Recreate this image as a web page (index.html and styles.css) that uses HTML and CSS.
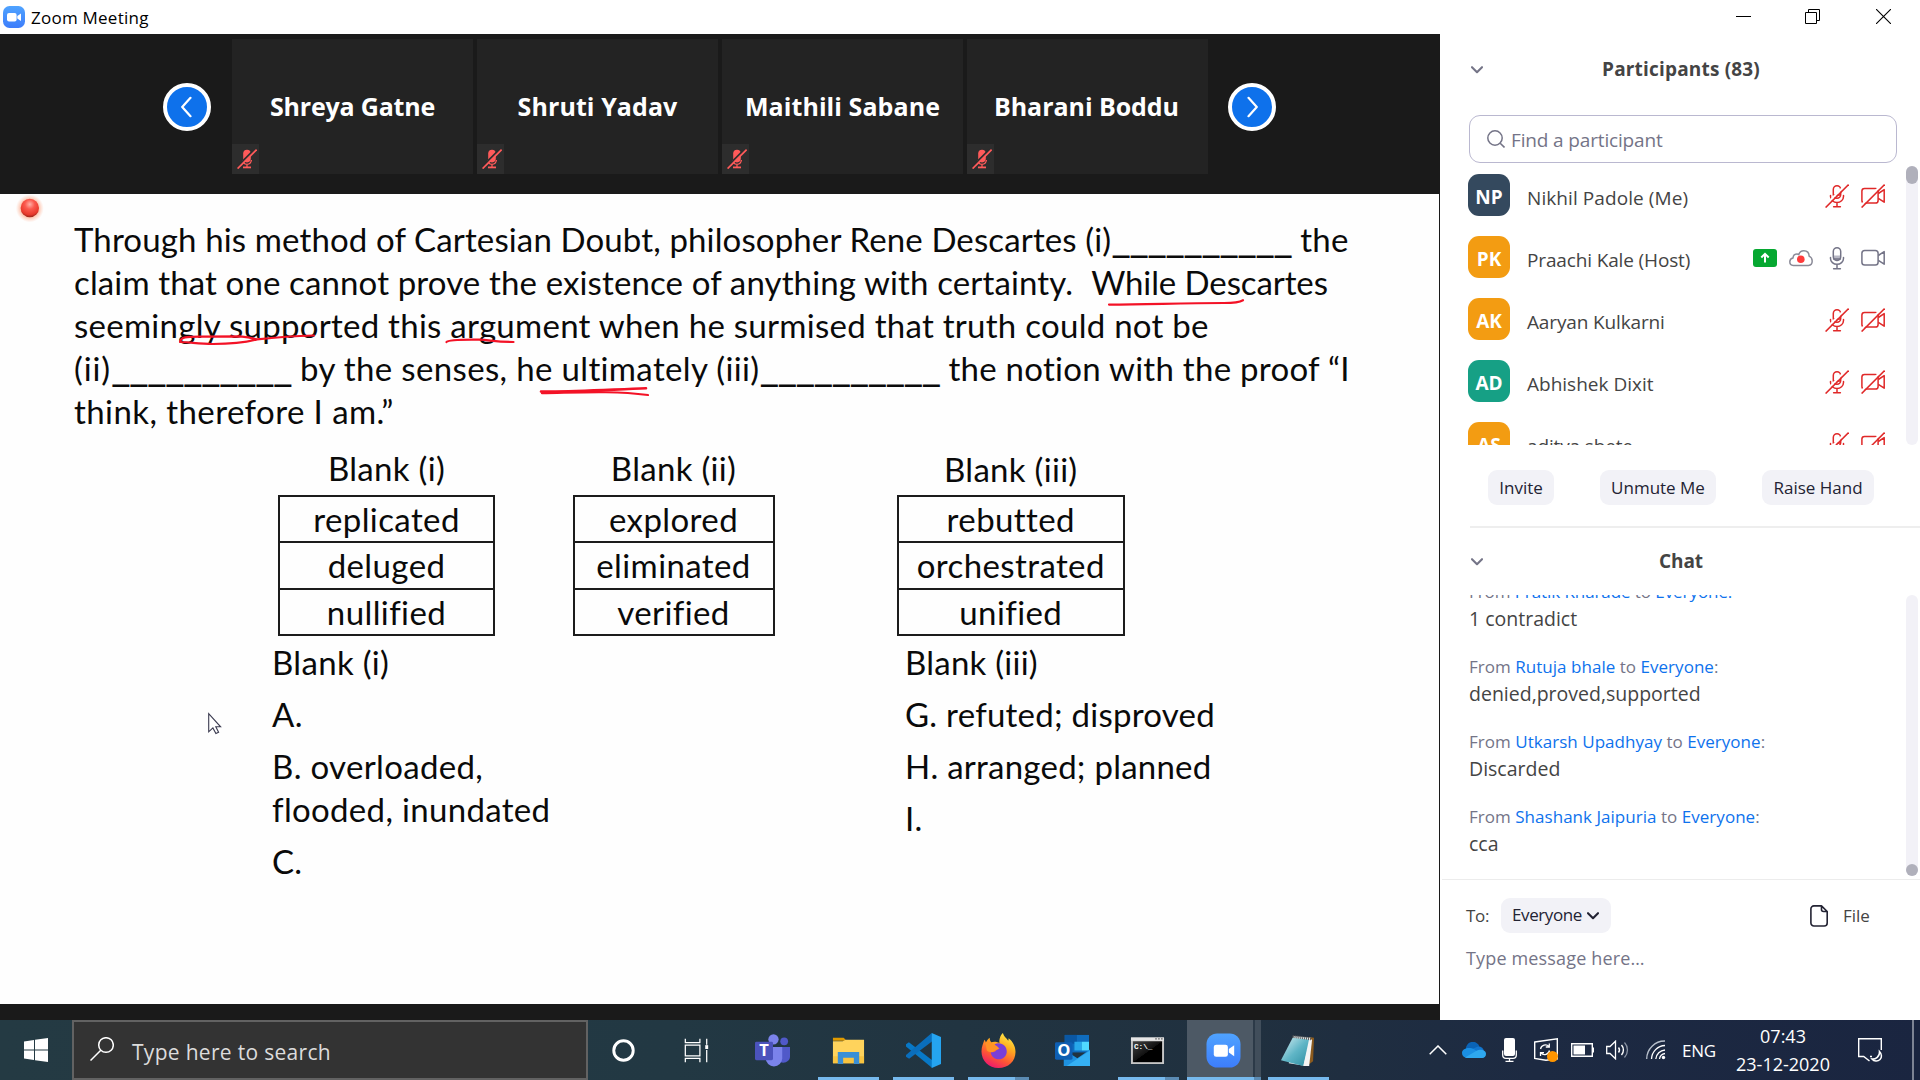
FILE: index.html
```html
<!DOCTYPE html>
<html lang="en">
<head>
<meta charset="utf-8">
<title>Zoom Meeting</title>
<link rel="stylesheet" href="styles.css">
</head>
<body>
<svg class="defs" aria-hidden="true">
  <defs>
    <linearGradient id="zoomBlue" x1="0" y1="0" x2="0" y2="1"><stop offset="0" stop-color="#4fa3ff"/><stop offset="1" stop-color="#3d7dfb"/></linearGradient>
    <linearGradient id="ffBody" x1=".8" y1="0" x2=".3" y2="1"><stop offset="0" stop-color="#fff14f"/><stop offset=".35" stop-color="#ffae1f"/><stop offset=".7" stop-color="#ff5634"/><stop offset="1" stop-color="#ee1670"/></linearGradient>
    <linearGradient id="noteGlass" x1="0" y1="0" x2="1" y2="1"><stop offset="0" stop-color="#d5eef2"/><stop offset=".5" stop-color="#5fb5c6"/><stop offset="1" stop-color="#2b8ba0"/></linearGradient>
    <linearGradient id="cmdGlass" x1="0" y1="0" x2="1" y2="1"><stop offset="0" stop-color="#444"/><stop offset=".5" stop-color="#111"/><stop offset=".51" stop-color="#000"/></linearGradient>
    <radialGradient id="recDot" cx=".5" cy=".3" r=".75"><stop offset="0" stop-color="#ffb0a6"/><stop offset=".35" stop-color="#fb5a4e"/><stop offset=".75" stop-color="#e8392c"/><stop offset="1" stop-color="#7d1d14"/></radialGradient>
    <radialGradient id="recGlow"><stop offset=".55" stop-color="#ff8a60" stop-opacity=".7"/><stop offset="1" stop-color="#ffb090" stop-opacity="0"/></radialGradient>
    <symbol id="mic-off" viewBox="0 0 24 24">
      <g fill="none" stroke="#e02828" stroke-width="1.5" stroke-linecap="round">
        <rect x="8.3" y="1.8" width="7.4" height="12.4" rx="3.7"/>
        <path d="M5.5 11.5v1a6.5 6 0 0 0 13 0v-1M12 18.5v4M8.6 22.8h6.8M9 11h6"/>
      </g>
      <path d="M-1 22.5 22.5-1" stroke="#fff" stroke-width="2.2"/>
      <path d="M.6 23.6 23.6.6" stroke="#e02828" stroke-width="1.5"/>
    </symbol>
    <symbol id="cam-off" viewBox="0 0 24 24">
      <g fill="none" stroke="#e02828" stroke-width="1.5" stroke-linejoin="round">
        <rect x=".9" y="4.4" width="16.2" height="14.6" rx="2.6"/>
        <path d="M17.3 9.5 23.2 5.6v12.6l-5.9-3.8"/>
      </g>
      <path d="M-1 22.5 22.5-1" stroke="#fff" stroke-width="2.2"/>
      <path d="M.6 23.6 23.6.6" stroke="#e02828" stroke-width="1.5"/>
    </symbol>
    <symbol id="mic-on" viewBox="0 0 24 24">
      <path d="M8.5 9.5h7v2.2a3.5 3.5 0 0 1-7 0z" fill="#b9b9c6"/>
      <g fill="none" stroke="#747487" stroke-width="1.5" stroke-linecap="round">
        <rect x="8.3" y="1.8" width="7.4" height="12.6" rx="3.7"/>
        <path d="M5.5 11.5v1a6.5 5.8 0 0 0 13 0v-1M12 18.5v4M8.6 22.8h6.8M8.6 13h6.8"/>
      </g>
    </symbol>
    <symbol id="cam-on" viewBox="0 0 24 24">
      <g fill="none" stroke="#747487" stroke-width="1.5" stroke-linejoin="round">
        <rect x=".9" y="4.4" width="16.2" height="14.6" rx="2.8"/>
        <path d="M17.3 9.5 23.2 5.6v12.6l-5.9-3.8"/>
      </g>
    </symbol>
    <symbol id="tile-mic" viewBox="0 0 20 20">
      <rect x="6.2" y=".8" width="7.6" height="12.6" rx="3.8" fill="#ff5a5a"/>
      <path d="M5.6 11c.3 2.500 2 4.300 4.400 4.300s4.100-1.800 4.400-4.300M10 15v3" fill="none" stroke="#ff5a5a" stroke-width="1.300"/>
      <path d="M6 18.4h8" stroke="#ff5a5a" stroke-width="1.8"/>
      <path d="M-.6 18.6 18.6-.6" stroke="#2c2c2c" stroke-width="2"/>
      <path d="M.6 19.6 19.6.6" stroke="#ff5a5a" stroke-width="1.7"/>
    </symbol>
    <symbol id="chevron" viewBox="0 0 12 8"><path d="M1 1.2 6 6.2l5-5" fill="none" stroke="currentColor" stroke-width="2.1" stroke-linecap="round" stroke-linejoin="round"/></symbol>
  </defs>
</svg>

<header class="titlebar">
  <svg class="app-icon" viewBox="0 0 22 22"><rect width="22" height="22" rx="6.5" fill="url(#zoomBlue)"/><rect x="4" y="7" width="9.6" height="8.4" rx="2" fill="#fff"/><path d="M14.3 10 18 7.4v7.6l-3.7-2.6z" fill="#fff"/></svg>
  <span class="app-title">Zoom Meeting</span>
  <div class="window-buttons">
    <svg viewBox="0 0 15 15"><path d="M0 7.5h15" stroke="#000"/></svg>
    <svg viewBox="0 0 15 15"><path d="M.5 3.5h11v11H.5zM3.5 3.5v-3h11v11h-3" fill="none" stroke="#000"/></svg>
    <svg viewBox="0 0 15 15"><path d="m0 0 15 15M15 0 0 15" stroke="#000" stroke-width="1.1"/></svg>
  </div>
</header>

<div class="workspace">
  <main class="stage">
    <section class="gallery">
      <button class="pager"><svg viewBox="0 0 12 22"><path d="M9.5 1.8 1.2 11l8.3 9.2" fill="none" stroke="#fff" stroke-width="2.2" stroke-linecap="round" stroke-linejoin="round"/></svg></button>
      <div class="tiles">
        <div class="tile"><span class="t1">Shreya Gatne</span><i class="badge"><svg><use href="#tile-mic"/></svg></i></div>
        <div class="tile"><span>Shruti Yadav</span><i class="badge"><svg><use href="#tile-mic"/></svg></i></div>
        <div class="tile"><span>Maithili Sabane</span><i class="badge"><svg><use href="#tile-mic"/></svg></i></div>
        <div class="tile"><span class="t4">Bharani Boddu</span><i class="badge"><svg><use href="#tile-mic"/></svg></i></div>
      </div>
      <button class="pager"><svg viewBox="0 0 12 22"><path d="M2.5 1.8 10.8 11l-8.3 9.2" fill="none" stroke="#fff" stroke-width="2.2" stroke-linecap="round" stroke-linejoin="round"/></svg></button>
    </section>

    <section class="slide">
      <div class="passage">
        <div class="line"><span class="s13">Through his method of Cartesian Doubt, philosopher Rene Descartes (i)</span><span class="blank">__________</span><span class="after s27">the</span></div>
        <div class="line"><span class="s13">claim that one cannot prove the existence of anything with certainty.</span><span class="sentence">While Descartes</span></div>
        <div class="line"><span class="s27">seemingly supported this argument when he surmised that truth could not be</span></div>
        <div class="line"><span class="s90">(ii)</span><span class="blank">__________</span><span class="after s36">by the senses, he ultimately (iii)</span><span class="blank">__________</span><span class="after s27">the notion with the proof “I</span></div>
        <div class="line"><span class="s40">think, therefore I am.”</span></div>
      </div>
      <div class="choices">
        <div class="choice c1"><h3>Blank (i)</h3><ul><li>replicated</li><li>deluged</li><li>nullified</li></ul></div>
        <div class="choice c2"><h3>Blank (ii)</h3><ul><li>explored</li><li>eliminated</li><li>verified</li></ul></div>
        <div class="choice c3"><h3>Blank (iii)</h3><ul><li>rebutted</li><li>orchestrated</li><li>unified</li></ul></div>
      </div>
      <div class="answers">
        <div class="answer"><p>Blank (i)</p><p>A.</p><p>B. overloaded,<br>flooded, inundated</p><p>C.</p></div>
        <div class="answer"><p>Blank (iii)</p><p>G. refuted; disproved</p><p>H. arranged; planned</p><p>I.</p></div>
      </div>
      <svg class="ink" viewBox="0 194 1439 810">
        <g fill="none" stroke="#f31226" stroke-width="2.2" stroke-linecap="round" stroke-linejoin="round">
          <path d="M180 342C181 337 186 336.6 200 336.6L240 336.4C248 337 252 338 257 339.4C247 342 228 344 213 344C198 344 190 342 180 342M257 339.4C275 337.5 296 336 314 335.5"/>
          <path d="M446.5 342C448 339.8 462 339.4 479 339.6C490 340 496 342 513.5 342"/>
          <path d="M541 391.5C565 392.5 612 389.5 646 388.3" stroke-width="2.6"/>
          <path d="M542 393.2C580 392.6 612 390.5 648 395"/>
          <path d="M1109 304.6C1150 304.5 1180 303 1224 303C1232 303 1240 302 1243 300.2"/>
        </g>
        <circle cx="29.8" cy="208.4" r="14" fill="url(#recGlow)"/>
        <circle cx="29.8" cy="208" r="9.2" fill="url(#recDot)"/>
        <path d="M208.7 713.6v18.2l4.2-3.900 3 5.600 2.700-1.300-2.800-5.400h4.800z" fill="#fff" stroke="#3b3b50" stroke-width="1.1"/>
      </svg>
    </section>
  </main>

  <aside class="sidebar">
    <section class="participants">
      <header class="panel-head"><svg class="chev"><use href="#chevron"/></svg><h2>Participants (83)</h2></header>
      <div class="search"><svg viewBox="0 0 18 18"><circle cx="8" cy="8" r="7.2" fill="none" stroke="#747487" stroke-width="1.5"/><path d="m13.2 13.2 4.3 4.3" stroke="#747487" stroke-width="1.6"/></svg><span>Find a participant</span></div>
      <div class="people">
        <div class="person"><b class="navy">NP</b><span class="wide">Nikhil Padole (Me)</span><div class="icons"><svg><use href="#mic-off"/></svg><svg><use href="#cam-off"/></svg></div></div>
        <div class="person"><b>PK</b><span class="tight">Praachi Kale (Host)</span><div class="icons">
          <svg viewBox="0 0 24 24"><rect y="3" width="24" height="18" rx="3" fill="#06a831"/><path d="M12 16.5V9M8.3 11.5 12 7.8l3.700 3.700" fill="none" stroke="#fff" stroke-width="2"/></svg>
          <svg viewBox="0 0 24 24"><path d="M4.300 19.400C2 19.400.8 17.700.8 15.800c0-2 1.200-3.500 3.200-3.900.2-2.300 1.800-3.800 4-3.800.7 0 1.300.1 1.800.4C10.600 6 12.400 4.700 14.800 4.700c3.300 0 5.300 2.300 5.300 5.400 2 .8 3.100 2.700 3.100 5 0 2.400-1.400 4.300-3.700 4.300z" fill="none" stroke="#8b8b98" stroke-width="1.5"/><circle cx="11.800" cy="13.200" r="3.800" fill="#ff3b3b"/></svg>
          <svg><use href="#mic-on"/></svg><svg><use href="#cam-on"/></svg></div></div>
        <div class="person"><b>AK</b><span class="tight">Aaryan Kulkarni</span><div class="icons"><svg><use href="#mic-off"/></svg><svg><use href="#cam-off"/></svg></div></div>
        <div class="person"><b class="teal">AD</b><span>Abhishek Dixit</span><div class="icons"><svg><use href="#mic-off"/></svg><svg><use href="#cam-off"/></svg></div></div>
        <div class="person"><b>AS</b><span class="tight">aditya shete</span><div class="icons"><svg><use href="#mic-off"/></svg><svg><use href="#cam-off"/></svg></div></div>
        <i class="track"><i class="thumb"></i></i>
      </div>
      <div class="actions"><button class="pill invite">Invite</button><button class="pill unmute">Unmute Me</button><button class="pill raise">Raise Hand</button></div>
    </section>
    <section class="chat">
      <header class="panel-head"><svg class="chev"><use href="#chevron"/></svg><h2>Chat</h2></header>
      <div class="messages">
        <article><p class="from pk">From <a>Pratik Kharade</a> to <a>Everyone:</a></p><p>1 contradict</p></article>
        <article><p class="from">From <a>Rutuja bhale</a> to <a>Everyone</a>:</p><p>denied,proved,supported</p></article>
        <article><p class="from">From <a>Utkarsh Upadhyay</a> to <a>Everyone</a>:</p><p>Discarded</p></article>
        <article><p class="from">From <a>Shashank Jaipuria</a> to <a>Everyone</a>:</p><p>cca</p></article>
        <i class="track bottom"><i class="thumb"></i></i>
      </div>
      <div class="composer">
        <div class="to-row"><span class="to">To:</span><button class="pill everyone">Everyone<svg><use href="#chevron"/></svg></button>
          <svg class="file-icon" viewBox="0 0 18 22"><path d="M4 .9h7.500L17.200 6.500V18a3 3 0 0 1-3 3H4a3 3 0 0 1-3.100-3V4A3 3 0 0 1 4 .9zM11.500 1v3.500a2 2 0 0 0 2 2h3.700" fill="none" stroke="#232333" stroke-width="1.600" stroke-linejoin="round"/></svg><span class="file">File</span></div>
        <p class="placeholder">Type message here…</p>
      </div>
    </section>
  </aside>
</div>

<footer class="taskbar">
  <div class="start"><svg viewBox="0 0 24 24"><path d="M0 3.400 10 2v9.500H0zM11 1.800 24 0v11.500H11zM0 12.500h10V22L0 20.600zM11 12.500h13V24l-13-1.800z" fill="#fff"/></svg></div>
  <div class="find"><svg viewBox="0 0 24 24"><circle cx="16" cy="8" r="7.300" fill="none" stroke="#fff" stroke-width="1.500"/><path d="M10.800 13.200.5 23.500" stroke="#fff" stroke-width="1.500"/></svg><span>Type here to search</span></div>
  <nav class="apps">
    <div class="app w-cortana"><svg viewBox="0 0 36 36"><circle cx="18" cy="18" r="10" fill="none" stroke="#fff" stroke-width="3"/></svg></div>
    <div class="app w-view"><svg viewBox="0 0 36 36"><path d="M6.500 6v4h15V6M6.500 30v-4h15v4M6.500 12.500h15v11h-15zM28.500 6v6M28.500 17.500V30" fill="none" stroke="#fff" stroke-width="1.300"/><path d="M27 12.500h3v4h-3z" fill="#fff"/></svg></div>
    <div class="app w-teams"><svg viewBox="0 0 36 36"><circle cx="30" cy="8.500" r="4" fill="#5059c9"/><path d="M22 14.500h14v9.500c0 4-3 6.500-7 6.500S22 28 22 24z" fill="#5059c9"/><circle cx="19" cy="6.500" r="5.300" fill="#7b83eb"/><path d="M11 14.500h17v11.500A8.500 8.500 0 0 1 11 26z" fill="#7b83eb"/><rect x="0" y="9" width="18.500" height="19" rx="1.500" fill="#4b53bc"/><text x="9.200" y="24" class="glyph">T</text></svg></div>
    <div class="app w-files open"><svg viewBox="0 0 36 36"><path d="M2 5h11l3 3H2z" fill="#e09a00"/><path d="M2 8.500h10L15 7h19v24H2z" fill="#ffd35c"/><path d="M2 24h32v7H2z" fill="#f9c440"/><path d="M7 19.500h22V32h-5.500v-6.500h-11V32H7z" fill="#3a8fd6"/></svg></div>
    <div class="app w-code open"><svg viewBox="0 0 36 36"><path d="M0 11.500 3 9.500 27 28v8L0 13.800z" fill="#0878c6"/><path d="M0 22.500 26.500 0 27 8.500 3.200 26.500 0 24.500z" fill="#0a6ebc"/><path d="M26.500 0 36 4v28l-9.500 4z" fill="#25a4f0"/></svg></div>
    <div class="app w-fox open"><svg viewBox="0 0 36 36"><path d="M22.500 0c1 3.500 3 4.500 5.500 8 .5-1 .3-2 .3-2.600C33 9 35.500 14 35.500 19.500 35.500 29 28 36 18 36S.500 28.500.500 19c0-5 2-8.500 3-12 1 1 1.300 2 1.500 3 1-2 2-3.500 4-5-.2 2 .5 3.500 1.500 4.500 3-1 6.500-.5 8.500 1-.5-3 .5-8 3.500-10.500z" fill="url(#ffBody)"/><path d="M14 11.500c6-3 13 1 12.500 8-.3 4.500-4 7.500-8 7.500-5 0-8.500-3.500-8.500-8 2 1.500 4 .5 5.500-1 1-1 3-1 3.500-2.500-2-.5-3.500-1-5-4z" fill="#7a3fd8"/><path d="M4.500 9.500c3-.5 5 .5 7 2.500 3 0 6 1.500 6.500 3.500-1 2-3 1.500-4.500 3-1.500 1.500-5 2-7.500-.5z" fill="#ff9326"/></svg><i class="stack"></i></div>
    <div class="app w-mail"><svg viewBox="0 0 36 36"><path d="M10 2h25v18H10z" fill="#0f6cbd"/><path d="M10 2h12.500v9H10z" fill="#0a57a3"/><path d="M20 9h7.500v9H20z" fill="#28a8ea"/><path d="M27.500 9H35v9h-7.500z" fill="#50d9ff"/><path d="M9 17l14 9 13-9v17H9z" fill="#1e91df"/><path d="M36 18v16H12z" fill="#35b0f3"/><rect x="0" y="9.500" width="18" height="18" rx="1.500" fill="#0f5fb3"/><text x="9" y="24" class="glyph">O</text></svg></div>
    <div class="app w-cmd open"><svg viewBox="0 0 36 36"><path d="M1 4.500h34v27.500H1z" fill="#c6c6c6"/><path d="M1 4.500h34V8H1z" fill="#e6e6e6"/><path d="M3 8.500h30V30H3z" fill="url(#cmdGlass)"/><path d="M26 6h1.500M29 6h1.500M32 6h1.500" stroke="#555" stroke-width="1.200"/><text x="4" y="16" class="prompt">C:\_</text></svg><i class="stack"></i></div>
    <div class="app w-zoom open active"><svg viewBox="0 0 36 36"><rect x=".5" y=".5" width="35" height="35" rx="11" fill="url(#zoomBlue)"/><rect x="8" y="12" width="14.500" height="12.500" rx="2.500" fill="#fff"/><path d="M23.500 16.500 29 12.500v11.500l-5.500-4z" fill="#fff"/></svg><i class="stack"></i></div>
    <div class="app w-note open"><svg viewBox="0 0 36 36"><path d="M30 4l5 1-1 24-5 4z" fill="#8a5a1e"/><path d="M14 3 32 5 27 34 9 31z" fill="#e8eef0"/><path d="M13 5 31 7 24 34 1 28z" fill="url(#noteGlass)"/><path d="M30 6l3 1-3 27-6 0z" fill="#f4f4f4"/><path d="M13 3.500 32 6" stroke="#555" stroke-width="3" stroke-dasharray="1 1"/></svg></div>
  </nav>
  <div class="tray">
    <svg class="i-up" viewBox="0 0 18 10"><path d="M.700 9.300 9 1l8.300 8.300" fill="none" stroke="#fff" stroke-width="1.500"/></svg>
    <svg class="i-cloud" viewBox="0 0 24 16"><path d="M4 8A7 7 0 0 1 17.500 4.500L12 11z" fill="#0a63b6"/><path d="M16 4.500a6 6 0 0 1 6 5L14 13 9 7.500z" fill="#1276cf"/><path d="M8 6c2.500 0 3.500 1 6 2.500l9 5.500c-1 1.500-2 2-4 2H5A5 5 0 0 1 0 11C0 8 3 5.500 8 6z" fill="#1a8fe3"/><path d="M3 15.500 15 8.500c3-1.500 9-.5 9 3.500 0 2.500-2 4-4 4H5z" fill="#2ea8ef"/></svg>
    <svg class="i-mic" viewBox="0 0 15 24"><rect x="2" y="0" width="11" height="18" rx="2" fill="#fff"/><path d="M.700 12.500V17c0 2 1.300 3.300 3.300 3.300h7c2 0 3.300-1.300 3.300-3.300v-4.500M7.500 20.500v3M3.500 23.300h8" fill="none" stroke="#fff" stroke-width="1.300"/></svg>
    <svg class="i-upd" viewBox="0 0 24 24"><path d="M.700 4 23.300.8v20L12 22.200.700 20.500z" fill="none" stroke="#fff" stroke-width="1.400"/><path d="M6.500 11a5 5 0 0 1 8.500-2.500M15.300 5.500v3.500h-3.500M15.500 12.500A5 5 0 0 1 7 15M6.500 18v-3.300H10" fill="none" stroke="#fff" stroke-width="1.300"/><circle cx="18.500" cy="18.500" r="5.500" fill="#ff9500"/></svg>
    <svg class="i-bat" viewBox="0 0 23 14"><path d="M.700.700h20.600v12.600H.700z" fill="none" stroke="#fff" stroke-width="1.400"/><path d="M2.500 2.500H14v9H2.500zM21.500 4.500H23v5h-1.500z" fill="#fff"/></svg>
    <svg class="i-vol" viewBox="0 0 24 20"><path d="M.700 6.500H4L9.500 1.200v17.600L4 13.500H.700z" fill="none" stroke="#fff" stroke-width="1.300"/><path d="M12.500 7.500a4 4 0 0 1 0 5M15.500 5a7.500 7.500 0 0 1 0 10" fill="none" stroke="#fff" stroke-width="1.400"/><path d="M18.500 2.500a11 11 0 0 1 0 15" fill="none" stroke="#8a93a3" stroke-width="1.300"/></svg>
    <svg class="i-net" viewBox="0 0 20 20"><g fill="none" stroke="#fff" stroke-width="1.300"><path d="M.700 19A18 18 0 0 1 19 1" stroke="#b8c0cc"/><path d="M5.500 19A14 14 0 0 1 19 5.500M9.800 19A10 10 0 0 1 19 10M13.500 19a6.500 6.500 0 0 1 5.500-5.500"/></g><circle cx="17.500" cy="17.500" r="1.700" fill="#fff"/></svg>
    <span class="lang">ENG</span>
    <div class="clock"><span>07:43</span><span>23-12-2020</span></div>
    <svg class="i-note" viewBox="0 0 24 24"><path d="M14 18.500H12M23.300 12V.7H.7v17.800h5L11.500 23" fill="none" stroke="#fff" stroke-width="1.400"/><path d="M21.500 13.500c2.500 2.500 2.500 6 .5 8-2.300 2.300-6 2-8-.5 3.500.5 8-2.500 7.500-7.500z" fill="none" stroke="#fff" stroke-width="1.500"/></svg>
    <i class="desktop-edge"></i>
  </div>
</footer>
</body>
</html>
```
FILE: styles.css
```css
* { box-sizing: border-box; }
body {
  margin: 0;
  width: 1920px;
  height: 1080px;
  overflow: hidden;
  display: flex;
  flex-direction: column;
  background: #fff;
  font-family: "Open Sans", "Noto Sans", sans-serif;
  color: #444;
}
p, h2, h3, ul { margin: 0; padding: 0; }
button { font: inherit; border: 0; padding: 0; }
svg { display: block; flex: none; }
i { font-style: normal; }
.defs { position: absolute; width: 0; height: 0; }

/* title bar */
.titlebar { height: 34px; flex: none; display: flex; align-items: center; padding-left: 3px; color: #000; }
.app-icon { width: 22px; height: 22px; }
.app-title { margin-left: 6px; font-size: 17px; letter-spacing: .24px; }
.window-buttons { margin-left: auto; display: flex; gap: 54px; padding: 0 29px 1px 0; }
.window-buttons svg { width: 15px; height: 15px; }
.window-buttons svg:last-child { margin-left: 2px; }

.workspace { display: flex; height: 986px; flex: none; }

/* gallery strip */
.stage { width: 1440px; background: #1a1a1a; border-right: 1px solid #1a1a1a; }
.gallery { height: 160px; display: flex; align-items: flex-start; padding-left: 163px; }
.pager {
  width: 48px; height: 48px; margin-top: 49px;
  border: 4px solid #fff; border-radius: 50%;
  background: #0e71eb;
  display: flex; align-items: center; justify-content: center;
}
.pager svg { width: 12px; height: 22px; }
.tiles { display: flex; gap: 4px; padding: 5px 0 20px; margin: 0 20px 0 21px; }
.tile {
  position: relative;
  width: 241px; height: 135px;
  padding-bottom: 2px;
  background: #232323;
  display: flex; align-items: center; justify-content: center;
  color: #fff; font-size: 25px; font-weight: 700; letter-spacing: .08px;
}
.tile .t1 { letter-spacing: -.2px; }
.tile .t4 { letter-spacing: -.05px; margin-right: 2px; }
.badge {
  position: absolute; left: 0; bottom: 0;
  width: 27px; height: 30px; padding-left: 2px; background: #2d2d2d;
  display: flex; align-items: center; justify-content: center;
}
.badge svg { width: 20px; height: 20px; }

/* shared slide */
.slide {
  position: relative;
  width: 1439px; height: 810px;
  padding-top: 24px;
  background: #fefefe;
  color: #0a0a0a;
  font-family: Lato, "Open Sans", sans-serif;
  font-size: 33px;
  line-height: 43px;
}
.passage { padding-left: 74px; }
.line { display: flex; align-items: baseline; height: 43px; white-space: pre; }
.s13 { letter-spacing: .13px; }
.s27 { letter-spacing: .27px; }
.s36 { letter-spacing: .35px; }
.s40 { letter-spacing: .42px; }
.s90 { letter-spacing: .9px; }
.blank { width: 180px; font-size: 43px; letter-spacing: -1.740px; line-height: 1px; }
.after { margin-left: 9px; }
.sentence { margin-left: 18px; letter-spacing: -.1px; }
.choices { display: flex; margin-top: 14px; padding-left: 278px; height: 188px; }
.choice h3 { font-size: 33px; font-weight: 400; text-align: center; letter-spacing: .3px; height: 48px; }
.choice ul { list-style: none; border: 2px solid #1c1c1c; }
.choice li { height: 46.500px; line-height: 45px; text-align: center; letter-spacing: .4px; border-top: 2px solid #1c1c1c; }
.choice li:first-child { border-top: 0; height: 44px; line-height: 44px; }
.c1 { width: 217px; }
.c2 { width: 202px; margin-left: 77.500px; }
.c3 { width: 228.500px; margin-left: 122px; }
.c3 h3 { padding-top: 1px; }
.answers { display: flex; padding-left: 272px; margin-top: 6px; letter-spacing: .32px; }
.answer { width: 633px; flex: none; display: flex; flex-direction: column; gap: 9px; }
.answer:last-child { width: 400px; letter-spacing: .24px; }
.ink { position: absolute; left: 0; top: 0; width: 1439px; height: 810px; }

/* sidebar */
.sidebar { width: 480px; background: #fff; }
.participants { height: 494px; border-bottom: 2px solid transparent; border-image: linear-gradient(90deg, #fff 32px, #eee 32px) 2; }
.panel-head { position: relative; display: flex; align-items: center; justify-content: center; height: 81px; padding: 0 0 12px 2px; }
.panel-head h2 { font-size: 19px; font-weight: 700; line-height: 26px; letter-spacing: .18px; color: #444; }
.chev { position: absolute; left: 31px; top: 32px; width: 12px; height: 8px; color: #747487; }
.search {
  width: 428px; height: 48px; margin-left: 29px; padding-left: 17px;
  border: 1.500px solid #bab8d0; border-radius: 11px;
  display: flex; align-items: center;
  color: #747487; font-size: 19px;
}
.search svg { width: 18px; height: 18px; margin-right: 6px; }
.search span { line-height: 26px; letter-spacing: -.15px; margin-top: 1px; }
.people { position: relative; height: 282px; padding-top: 1px; overflow: hidden; }
.person { height: 62px; display: flex; align-items: center; padding: 0 35px 0 28px; font-size: 19px; }
.person b {
  width: 42px; height: 42px; border-radius: 11px; margin-right: 17px;
  background: #f39c12; color: #fff; text-align: center; line-height: 47px;
}
.person .navy { background: #34495e; }
.person .teal { background: #16a085; }
.person span { line-height: 26px; margin-top: 6px; }
.person .tight { letter-spacing: -.14px; }
.person .wide { letter-spacing: .08px; }
.icons { margin: 1px 0 0 auto; display: flex; gap: 12px; }
.icons svg { width: 24px; height: 24px; overflow: visible; }
.track { position: absolute; right: 2px; top: 3px; bottom: 0; width: 12px; border-radius: 6px; background: #f2f1f7; }
.thumb { display: block; width: 12px; height: 18px; border-radius: 6px; background: #b0b0bb; }
.track.bottom { top: 0; display: flex; align-items: flex-end; }
.bottom .thumb { height: 12px; }
.actions { display: flex; padding: 25px 0 0 48px; }
.pill { height: 35px; border-radius: 9px; background: #f2f2f7; color: #232333; font-size: 17px; line-height: 35px; }
.invite { width: 66px; margin-right: 46px; }
.unmute { width: 116px; margin-right: 46px; }
.raise { width: 112px; }

.chat .panel-head { height: 67px; padding-bottom: 1px; }
.chat .panel-head h2 { letter-spacing: -.05px; }
.chat .chev { top: 30px; }
.messages {
  position: relative; height: 281px; padding: 0 0 18px 29px; overflow: hidden;
  display: flex; flex-direction: column; justify-content: flex-end; gap: 21px;
}
.messages article { flex: none; height: 54px; }
.messages p { font-size: 19.500px; line-height: 29px; }
.messages .from { font-size: 17px; line-height: 25px; color: #747487; letter-spacing: .03px; }
.messages .pk { letter-spacing: -.08px; }
.messages a { color: #0e72ed; }
.composer { margin: 3px 0 0 2px; border-top: 1px solid #ececec; padding: 18px 0 0 24px; }
.to-row { display: flex; align-items: center; height: 35px; font-size: 17px; color: #444; }
.to { width: 35px; letter-spacing: -.3px; }
.everyone { width: 110px; letter-spacing: -.4px; line-height: 33px; display: flex; align-items: center; padding: 0 0 2px 11px; }
.everyone svg { width: 12px; height: 8px; margin: 2px 0 0 5px; }
.file-icon { width: 18px; height: 22px; margin-left: 199px; }
.file { margin-left: 15px; }
.placeholder { margin-top: 12px; font-size: 18px; line-height: 26px; letter-spacing: .16px; color: #747487; }

/* taskbar */
.taskbar { height: 60px; flex: none; display: flex; background: linear-gradient(90deg, #243a43 0%, #223843 35%, #20303f 65%, #1d2a42 80%, #1a2540 100%); color: #fff; }
.start { width: 72px; padding: 18px 0 0 24px; }
.start svg { width: 24px; height: 24px; }
.find { width: 516px; border: 2px solid #626262; background: #333; display: flex; align-items: center; padding-left: 16px; color: #dcdcdc; font-size: 21px; letter-spacing: .3px; }
.find svg { width: 24px; height: 24px; margin: -3px 18px 0 0; }
.find span { line-height: 28px; margin-top: 3px; }
.apps { display: flex; width: 829px; }
.app { position: relative; width: 75px; height: 60px; display: flex; align-items: center; justify-content: center; flex: none; }
.app svg { width: 35px; height: 35px; }
.w-cortana { width: 72px; }
.w-view svg, .w-mail svg, .w-cmd svg { margin-right: 2px; }
.w-cortana svg { margin-right: 1px; }
.w-view { width: 74px; }
.w-teams { width: 77px; }
.w-zoom { width: 74px; margin-left: 1px; }
.w-zoom svg { margin-right: 2px; }
.w-note svg { margin-right: 3px; }
.app.open::after { content: ""; position: absolute; left: 7px; right: 7px; bottom: 0; height: 3px; background: #76b9ed; }
.stack { position: absolute; z-index: 1; right: 7px; bottom: 0; width: 14px; height: 3px; background: #5b8bb3; }
.active { background: linear-gradient(90deg, #4d5965 66px, #2c3a48 66px, #2c3a48 68px, #414e5b 68px); }
.app.active::after { left: 0; right: 0; }
.active .stack { right: 0; width: 7px; }
.glyph { font: 700 17px "Open Sans", sans-serif; fill: #fff; text-anchor: middle; }
.prompt { font: 700 8px "Liberation Mono", monospace; fill: #fff; }
.tray { position: relative; flex: 1; display: flex; align-items: center; padding-left: 12px; }
.i-up { width: 18px; height: 10px; margin-right: 15px; }
.i-cloud { width: 24px; height: 16px; margin-right: 16px; }
.i-mic { width: 15px; height: 24px; margin-right: 17px; }
.i-upd { width: 24px; height: 24px; margin-right: 13px; }
.i-bat { width: 23px; height: 14px; margin-right: 12px; }
.i-vol { width: 24px; height: 20px; margin-right: 16px; }
.i-net { width: 20px; height: 20px; margin-right: 16px; }
.lang { width: 53px; font-size: 17px; letter-spacing: -.2px; }
.clock { width: 96px; font-size: 18px; line-height: 28px; display: flex; flex-direction: column; align-items: center; white-space: nowrap; margin-right: 27px; }
.i-note { width: 24px; height: 24px; overflow: visible; }
.desktop-edge { position: absolute; right: 6px; top: 0; bottom: 0; width: 2px; background: #7d8494; }
```
